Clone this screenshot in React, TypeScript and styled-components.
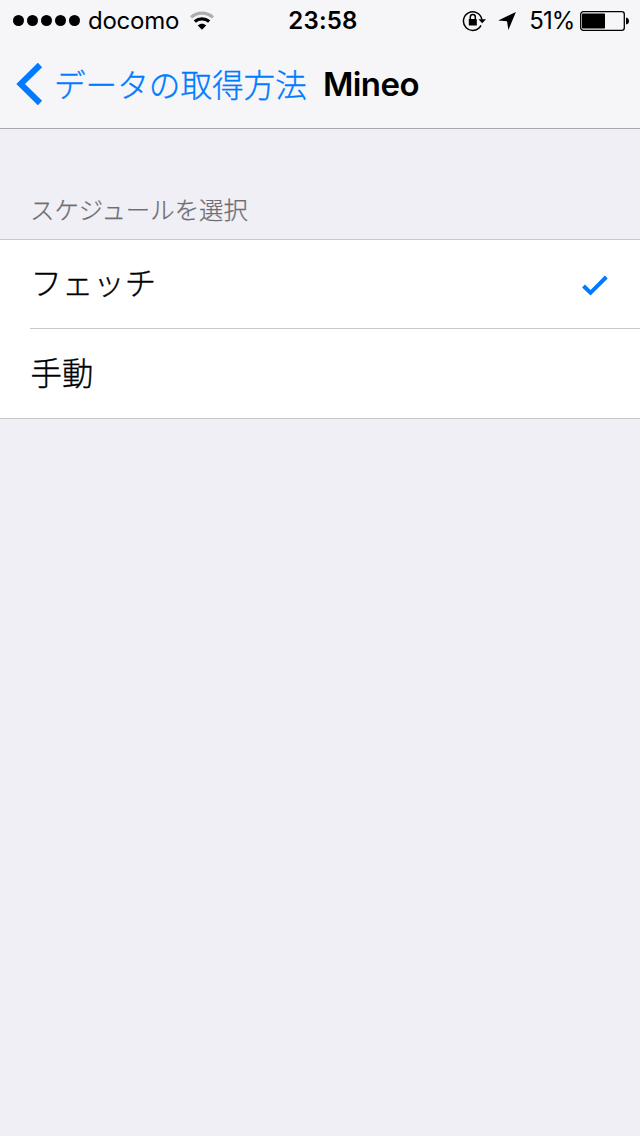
import React from 'react';
import styled, { createGlobalStyle } from 'styled-components';

const GlobalStyle = createGlobalStyle`
  * { box-sizing: border-box; }
  body { margin: 0; background: #efeff5; }
`;

const Screen = styled.div`
  min-height: 1136px;
  background: #efeff5;
  color: #000;
  font-family: Inter, 'Noto Sans CJK JP', sans-serif;
`;

const TopArea = styled.header`
  height: 129px;
  background: #f6f6f8;
  border-bottom: 1px solid #a7a7ac;
`;

const StatusBar = styled.div`
  display: grid;
  grid-template-columns: 1fr auto 1fr;
  align-items: center;
  height: 40px;
  padding: 1px 11px 0 13px;
  line-height: 39px;
  font-size: 24px;
`;

const StatusGroup = styled.div<{ $end?: boolean }>`
  display: flex;
  align-items: center;
  justify-content: ${({ $end }) => ($end ? 'flex-end' : 'flex-start')};
  white-space: nowrap;
  svg { flex: none; display: block; }
`;

const SignalDots = styled.div`
  display: flex;
  gap: 3px;
  margin-right: 8px;
`;

const Dot = styled.i`
  width: 11px;
  height: 11px;
  border-radius: 50%;
  background: #000;
`;

const Carrier = styled.span`
  width: 91px;
  margin-right: 11px;
  letter-spacing: -0.25px;
`;

const Clock = styled.time`
  padding: 0 0 0 4px;
  font-weight: 600;
  letter-spacing: 0.2px;
`;

const BatteryLevel = styled.span`
  margin: 0 5.5px 0 13px;
  letter-spacing: -0.9px;
`;

const NavBar = styled.nav`
  display: flex;
  align-items: center;
  height: 88px;
  padding-left: 16px;
`;

const BackButton = styled.a`
  display: flex;
  align-items: center;
  color: #007aff;
  svg { flex: none; }
`;

const BackLabel = styled.span`
  width: 254px;
  margin: 0 0 3px 11px;
  font-family: 'Noto Sans CJK JP', sans-serif;
  font-size: 31.6px;
  font-weight: 300;
  -webkit-text-stroke: 0.35px currentColor;
  line-height: 44px;
  white-space: nowrap;
`;

const Title = styled.h1`
  margin: 0 0 0 15px;
  font-size: 33px;
  font-weight: 600;
  line-height: 44px;
  letter-spacing: -0.6px;
`;

const SectionHeader = styled.h2`
  display: flex;
  align-items: flex-end;
  height: 110px;
  margin: 0;
  padding: 0 30px 12px;
  color: #6d6d72;
  font-family: 'Noto Sans CJK JP', sans-serif;
  font-size: 24.4px;
  font-weight: 300;
  -webkit-text-stroke: 0.25px currentColor;
  line-height: 36px;
`;

const List = styled.ul`
  margin: 0;
  padding: 0 0 0 30px;
  list-style: none;
  background: #fff;
  border-top: 1px solid #c8c7cc;
  border-bottom: 1px solid #c8c7cc;
`;

const Option = styled.li`
  display: flex;
  align-items: center;
  justify-content: space-between;
  height: 88px;
  padding-right: 32px;
  font-family: 'Noto Sans CJK JP', sans-serif;
  font-size: 31.4px;
  font-weight: 300;
  -webkit-text-stroke: 0.35px currentColor;
  line-height: 44px;
  & + & {
    height: 90px;
    border-top: 1px solid #c8c7cc;
  }
  svg { margin-top: 2px; }
`;

const OptionLabel = styled.span`
  padding: 0 0 4px 0.5px;
`;

const WifiIcon = () => (
  <svg width="24" height="20" viewBox="0 0 24 20" fill="none">
    <path d="M1 6.4C7.2 .8 16.8 .8 23 6.4" stroke="#adadaf" strokeWidth="3.2" />
    <path d="M4.8 10.5C9 6.9 15 6.9 19.2 10.5" stroke="#000" strokeWidth="3.2" />
    <path d="M7.8 14.4C10.2 12.3 13.8 12.3 16.2 14.4L12 18.8Z" fill="#000" />
  </svg>
);

const RotationLockIcon = () => (
  <svg width="24" height="22" viewBox="0 0 24 22" fill="none">
    <path d="M19 15.4A9.3 9.3 0 1 1 19.9 9.6" stroke="#000" strokeWidth="1.5" />
    <path d="M16.4 9.3H24L20.2 13.3Z" fill="#000" />
    <rect x="6.8" y="9" width="8" height="6.6" rx=".6" fill="#000" />
    <path d="M8.3 9.5V7.1a2.5 2.5 0 0 1 5 0V9.5" stroke="#000" strokeWidth="1.5" />
  </svg>
);

const LocationIcon = () => (
  <svg width="18" height="18" viewBox="0 0 18 18">
    <path d="M17.9 0L10.4 18L9 9.2L.2 8.4Z" fill="#000" />
  </svg>
);

const BatteryIcon = () => (
  <svg width="49" height="20" viewBox="0 0 49 20">
    <rect x=".7" y=".7" width="43.6" height="18.6" rx="2.6" fill="none" stroke="#000" strokeWidth="1.3" />
    <rect x="2" y="2.5" width="23" height="15" rx=".8" fill="#000" />
    <path d="M46 6.5Q49 7 49 10T46 13.5Z" fill="#000" />
  </svg>
);

const BackChevron = () => (
  <svg width="27" height="44" viewBox="0 0 27 44" fill="none">
    <path d="M24 3L4.6 22L24 41" stroke="#007aff" strokeWidth="6" />
  </svg>
);

const Checkmark = () => (
  <svg width="26" height="22" viewBox="0 0 26 22" fill="none">
    <path d="M1.5 12L8.5 18.8L24.3 3" stroke="#007aff" strokeWidth="4" />
  </svg>
);

const IconGap = styled.span`
  width: 12px;
`;

const options = [
  { label: 'フェッチ', selected: true },
  { label: '手動', selected: false },
];

export default function App() {
  return (
    <Screen>
      <GlobalStyle />
      <TopArea>
        <StatusBar>
          <StatusGroup>
            <SignalDots>{[0, 1, 2, 3, 4].map((n) => <Dot key={n} />)}</SignalDots>
            <Carrier>docomo</Carrier>
            <WifiIcon />
          </StatusGroup>
          <Clock>23:58</Clock>
          <StatusGroup $end>
            <RotationLockIcon />
            <IconGap />
            <LocationIcon />
            <BatteryLevel>51%</BatteryLevel>
            <BatteryIcon />
          </StatusGroup>
        </StatusBar>
        <NavBar>
          <BackButton>
            <BackChevron />
            <BackLabel>データの取得方法</BackLabel>
          </BackButton>
          <Title>Mineo</Title>
        </NavBar>
      </TopArea>
      <main>
        <SectionHeader>スケジュールを選択</SectionHeader>
        <List>
          {options.map(({ label, selected }) => (
            <Option key={label}>
              <OptionLabel>{label}</OptionLabel>
              {selected && <Checkmark />}
            </Option>
          ))}
        </List>
      </main>
    </Screen>
  );
}
